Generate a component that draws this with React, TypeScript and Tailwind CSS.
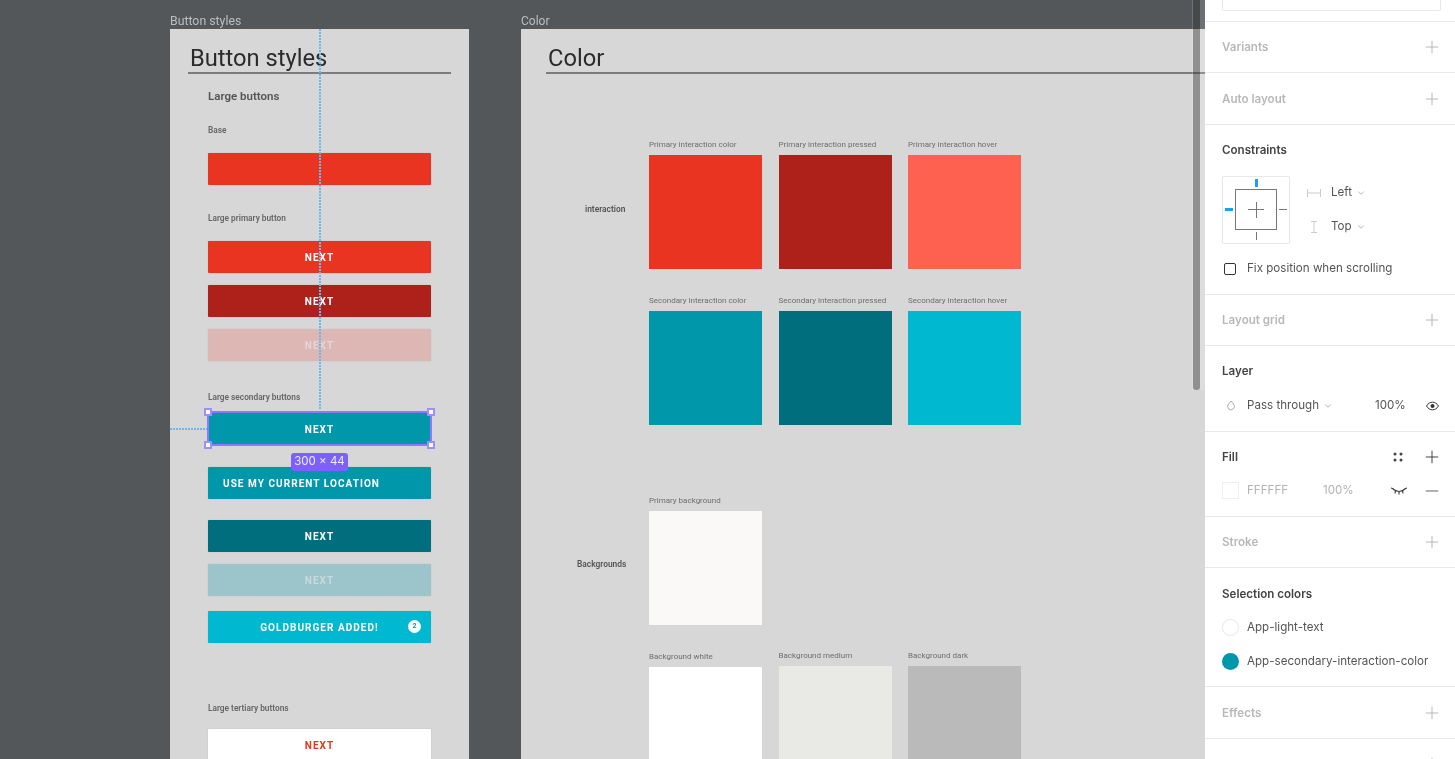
import { Plus, Minus, ChevronDown } from "lucide-react";

const swatchRows = [
  [
    { label: "Primary interaction color", color: "bg-[#e83421]" },
    { label: "Primary interaction pressed", color: "bg-[#ad211a]" },
    { label: "Primary interaction hover", color: "bg-[#ff6150]" },
  ],
  [
    { label: "Secondary interaction color", color: "bg-[#0097ab]" },
    { label: "Secondary interaction pressed", color: "bg-[#006e7c]" },
    { label: "Secondary interaction hover", color: "bg-[#00b8d0]" },
  ],
];

function SmallHeading({ children, className }: { children: string; className: string }) {
  return <p className={`font-['Roboto',sans-serif] text-[8.300px] leading-[10px] font-semibold text-[#666] ${className}`}>{children}</p>;
}

function BigButton({
  label,
  bg,
  text = "text-white",
  className = "",
  children,
}: {
  label: string;
  bg: string;
  text?: string;
  className?: string;
  children?: React.ReactNode;
}) {
  return (
    <div className={`relative flex h-[32px] w-[223px] items-center justify-center rounded-[1px] font-['Roboto',sans-serif] text-[10px] font-bold tracking-[1.050px] shadow-[0_0_2px_rgba(0,0,0,0.1)] ${bg} ${text} ${className}`}>
      {label}
      {children}
    </div>
  );
}

function Swatch({ label, color }: { label: string; color: string }) {
  return (
    <div className="w-[113px]">
      <p className="mb-[5px] h-[10px] whitespace-nowrap font-['Roboto',sans-serif] text-[8px] leading-[10px] text-[#6e6e6e]">{label}</p>
      <div className={`h-[114px] w-[113px] ${color}`} />
    </div>
  );
}

function PanelSection({ children, className = "" }: { children: React.ReactNode; className?: string }) {
  return <section className={`border-b border-[#e8e8e8] px-[17px] ${className}`}>{children}</section>;
}

function EmptySection({ title, height }: { title: string; height: string }) {
  return (
    <PanelSection className={`flex items-center justify-between ${height}`}>
      <span className="pt-[2px] text-[11.600px] font-semibold text-[#b8b8b8]">{title}</span>
      <Plus size={20} strokeWidth={1.1} className="mr-[-4px] text-[#b0b0b0]" />
    </PanelSection>
  );
}

function ConstraintsBox() {
  return (
    <div className="relative h-[68px] w-[68px] rounded-[2px] border border-[#e8e8e8]">
      <div className="absolute left-[12px] top-[12px] h-[41px] w-[42px] border border-[#777]" />
      <div className="absolute left-[25px] top-[32px] h-px w-[16px] bg-[#777]" />
      <div className="absolute left-[33px] top-[25px] h-[16px] w-px bg-[#777]" />
      <div className="absolute left-[32px] top-[2px] h-[8px] w-[3px] bg-[#18a0fb]" />
      <div className="absolute left-[2px] top-[31px] h-[3px] w-[8px] bg-[#18a0fb]" />
      <div className="absolute left-[56px] top-[32px] h-px w-[8px] bg-[#777]" />
      <div className="absolute left-[33px] top-[55px] h-[8px] w-px bg-[#777]" />
    </div>
  );
}

function PropertiesPanel() {
  return (
    <aside className="flex h-full w-[250px] shrink-0 flex-col bg-white font-['Inter',sans-serif] text-[#444]">
      <PanelSection className="h-[22px] shrink-0">
        <div className="h-[11px] w-[219px] rounded-b-[2px] border border-t-0 border-[#e8e8e8]" />
      </PanelSection>
      <EmptySection title="Variants" height="h-[51px] shrink-0" />
      <EmptySection title="Auto layout" height="h-[52px] shrink-0" />

      <PanelSection className="h-[170px] shrink-0 pt-[18px]">
        <h3 className="text-[11.600px] leading-[14px] font-semibold text-[#444]">Constraints</h3>
        <div className="mt-[19px] flex">
          <ConstraintsBox />
          <div className="ml-[17px] flex flex-col gap-[19px] pt-[9px] text-[11.600px] leading-[15px] text-[#555]">
            <div className="flex items-center">
              <svg width="14" height="10" viewBox="0 0 14 10" className="mr-[10px] text-[#ccc]" fill="none" stroke="currentColor">
                <path d="M.5 1v8M13.500 1v8M1 5h12" />
              </svg>
              Left
              <ChevronDown size={10} className="ml-[4px] text-[#aaa]" />
            </div>
            <div className="flex items-center">
              <svg width="14" height="14" viewBox="0 0 14 14" className="mr-[10px] text-[#ccc]" fill="none" stroke="currentColor">
                <path d="M4 1.500h6M4 12.500h6M7 2v10" />
              </svg>
              Top
              <ChevronDown size={10} className="ml-[4px] text-[#aaa]" />
            </div>
          </div>
        </div>
        <label className="mt-[16px] flex items-center text-[11.600px] text-[#555]">
          <span className="ml-[2px] mr-[11px] h-[12px] w-[12px] rounded-[2px] border border-[#333]" />
          Fix position when scrolling
        </label>
      </PanelSection>

      <EmptySection title="Layout grid" height="h-[51px] shrink-0" />

      <PanelSection className="h-[86px] shrink-0 pt-[18px]">
        <h3 className="text-[11.600px] leading-[14px] font-semibold text-[#444]">Layer</h3>
        <div className="mt-[19px] flex h-[17px] items-center whitespace-nowrap text-[11.600px] text-[#555]">
          <svg width="10" height="11" viewBox="0 0 10 11" className="ml-[4px] mr-[11px] shrink-0 text-[#aaa]" fill="none" stroke="currentColor">
            <path d="M5 1 7.600 4.200a3.400 3.400 0 1 1-5.200 0Z" />
          </svg>
          Pass through
          <ChevronDown size={10} className="ml-[4px] shrink-0 text-[#aaa]" />
          <span className="ml-[42px]">100%</span>
          <svg width="15" height="10" viewBox="0 0 14 10" className="ml-[19px] shrink-0 text-[#333]" fill="none" stroke="currentColor">
            <path d="M1 5c1.600-2.600 3.600-3.800 6-3.800S11.400 2.400 13 5c-1.600 2.600-3.600 3.800-6 3.800S2.600 7.600 1 5Z" />
            <circle cx="7" cy="5" r="2" fill="currentColor" stroke="none" />
          </svg>
        </div>
      </PanelSection>

      <PanelSection className="h-[85px] shrink-0 pt-[18px]">
        <div className="flex h-[14px] items-center justify-between">
          <h3 className="text-[11.600px] leading-[14px] font-semibold text-[#444]">Fill</h3>
          <div className="flex items-center gap-[19px]">
            <svg width="10" height="10" viewBox="0 0 10 10" className="text-[#444]" fill="currentColor">
              <circle cx="2" cy="2" r="1.500" />
              <circle cx="8" cy="2" r="1.500" />
              <circle cx="2" cy="8" r="1.500" />
              <circle cx="8" cy="8" r="1.500" />
            </svg>
            <Plus size={20} strokeWidth={1.1} className="mr-[-4px] text-[#333]" />
          </div>
        </div>
        <div className="mt-[18px] flex h-[17px] items-center whitespace-nowrap text-[11.600px] text-[#b3b3b3]">
          <span className="mr-[8px] h-[17px] w-[17px] shrink-0 border border-[#eee] bg-white" />
          <span className="w-[76px] shrink-0">FFFFFF</span>
          <span className="shrink-0">100%</span>
          <svg width="16" height="8" viewBox="0 0 16 8" className="ml-[37px] shrink-0 text-[#333]" fill="none" stroke="currentColor" strokeWidth="1.100">
            <path d="M1.500 1.500c2 2 4 3 6.500 3s4.500-1 6.500-3M4.500 3.500 4 6.500M8 4.500v3M11.500 3.500l.5 3M1.500 1.500 0 1M14.500 1.500 16 1" />
          </svg>
          <Minus size={20} strokeWidth={1.1} className="ml-[15px] shrink-0 text-[#555]" />
        </div>
      </PanelSection>

      <EmptySection title="Stroke" height="h-[51px] shrink-0" />

      <PanelSection className="h-[119px] shrink-0 pt-[19px]">
        <h3 className="text-[11.600px] leading-[14px] font-semibold text-[#444]">Selection colors</h3>
        <div className="mt-[18px] flex items-center text-[11.600px] leading-[17px] text-[#555]">
          <span className="mr-[8px] h-[17px] w-[17px] rounded-full border border-[#e8e8e8] bg-white" />
          App-light-text
        </div>
        <div className="mt-[17px] flex items-center text-[11.600px] leading-[17px] text-[#555]">
          <span className="mr-[8px] h-[17px] w-[17px] rounded-full bg-[#0097ab]" />
          App-secondary-interaction-color
        </div>
      </PanelSection>

      <EmptySection title="Effects" height="h-[52px] shrink-0" />
      <div className="flex justify-end px-[17px] pt-[15px]">
        <Plus size={20} strokeWidth={1.1} className="mr-[-4px] text-[#b0b0b0]" />
      </div>
    </aside>
  );
}

function ButtonStylesFrame() {
  return (
    <div className="w-[299px] shrink-0">
      <p className="h-[29px] pt-[14px] font-['Roboto',sans-serif] text-[12.300px] leading-[14px] text-[#bdbdbd]">Button styles</p>
      <div className="relative h-[730px] overflow-hidden bg-[#d7d7d7] pl-[38px]">
        <div className="-ml-[20px] h-[45px] w-[263px] border-b-2 border-[#7c7c7c] pl-[2px] pt-[15px] font-['Roboto',sans-serif] text-[23.700px] leading-[28px] text-[#2b2b2b]">
          Button styles
        </div>
        <p className="mt-[15px] font-['Roboto',sans-serif] text-[11.500px] leading-[14px] font-semibold text-[#555]">Large buttons</p>
        <SmallHeading className="mt-[22px]">Base</SmallHeading>
        <BigButton label="" bg="bg-[#e83421]" className="mt-[18px]" />
        <SmallHeading className="mt-[28px]">Large primary button</SmallHeading>
        <BigButton label="NEXT" bg="bg-[#e83421]" className="mt-[18px]" />
        <BigButton label="NEXT" bg="bg-[#ad211a]" className="mt-[12px]" />
        <BigButton label="NEXT" bg="bg-[#dcb7b3]" text="text-[#e6d5d3]" className="mt-[12px]" />
        <SmallHeading className="mt-[31px]">Large secondary buttons</SmallHeading>
        <BigButton label="NEXT" bg="bg-[#0097ab]" className="mt-[11px]" />
        <BigButton label="USE MY CURRENT LOCATION" bg="bg-[#0097ab]" className="mt-[22px] justify-start pl-[15px]" />
        <BigButton label="NEXT" bg="bg-[#006e7c]" className="mt-[21px]" />
        <BigButton label="NEXT" bg="bg-[#9bc5ca]" text="text-[#c9dadc]" className="mt-[12px]" />
        <BigButton label="GOLDBURGER ADDED!" bg="bg-[#00b8d0]" className="mt-[15px]">
          <span className="absolute right-[10px] top-[9px] flex h-[13px] w-[13px] items-center justify-center rounded-full bg-white text-[7px] font-bold tracking-normal text-[#0097ab]">2</span>
        </BigButton>
        <SmallHeading className="mt-[60px]">Large tertiary buttons</SmallHeading>
        <BigButton label="NEXT" bg="bg-white" text="text-[#e83421]" className="mt-[16px]" />

        {/* selection overlay, guides and size badge */}
        <div className="absolute left-[149px] top-0 h-[381px] w-[2px] bg-[repeating-linear-gradient(to_bottom,#6ab8ef_0,#6ab8ef_2px,transparent_2px,transparent_3px)]" />
        <div className="absolute left-0 top-[399px] h-[2px] w-[37px] bg-[repeating-linear-gradient(to_right,#6ab8ef_0,#6ab8ef_2px,transparent_2px,transparent_3px)]" />
        <div className="absolute left-[37px] top-[382px] h-[35px] w-[225px] border-2 border-[#8f78ff]" />
        <span className="absolute left-[34px] top-[379px] h-[8px] w-[8px] border-2 border-[#a08dff] bg-white" />
        <span className="absolute left-[257px] top-[379px] h-[8px] w-[8px] border-2 border-[#a08dff] bg-white" />
        <span className="absolute left-[34px] top-[412px] h-[8px] w-[8px] border-2 border-[#a08dff] bg-white" />
        <span className="absolute left-[257px] top-[412px] h-[8px] w-[8px] border-2 border-[#a08dff] bg-white" />
        <span className="absolute left-[121px] top-[424px] flex h-[18px] w-[57px] items-center justify-center rounded-[3px] bg-[#7b61ff] font-['Inter',sans-serif] text-[11.500px] text-[#eee]">300 × 44</span>
      </div>
    </div>
  );
}

function ColorFrame() {
  return (
    <div className="relative ml-[52px] min-w-0 flex-1">
      <p className="h-[29px] pt-[14px] font-['Roboto',sans-serif] text-[12px] leading-[14px] text-[#bdbdbd]">Color</p>
      <div className="relative h-[730px] overflow-hidden bg-[#d7d7d7] pl-[25px]">
        <div className="h-[45px] border-b-2 border-[#7c7c7c] pl-[2px] pt-[15px] font-['Roboto',sans-serif] text-[23.700px] leading-[28px] text-[#2b2b2b]">
          Color
        </div>

        <div className="mt-[66px] ml-[103px] flex flex-col gap-[27px]">
          {swatchRows.map((row, i) => (
            <div key={i} className="flex gap-[16.500px]">
              {row.map((s) => (
                <Swatch key={s.label} {...s} />
              ))}
            </div>
          ))}
        </div>
        <p className="absolute left-[64px] top-[175px] font-['Roboto',sans-serif] text-[8.400px] leading-[10px] font-semibold text-[#555]">interaction</p>

        <div className="mt-[71px] ml-[103px]">
          <Swatch label="Primary background" color="bg-[#faf9f7]" />
        </div>
        <p className="absolute left-[56px] top-[530px] font-['Roboto',sans-serif] text-[8.400px] leading-[10px] font-semibold text-[#555]">Backgrounds</p>

        <div className="mt-[26px] ml-[103px] flex gap-[16.500px]">
          <div className="pt-px">
            <Swatch label="Background white" color="bg-white" />
          </div>
          <Swatch label="Background medium" color="bg-[#e9eae6]" />
          <Swatch label="Background dark" color="bg-[#bababa]" />
        </div>
      </div>

      {/* canvas scrollbar sits over the frame, so it stays see-through */}
      <div className="absolute right-0 top-0 h-[390px] w-[13px] bg-white/15">
        <div className="ml-px h-[390px] w-[7px] rounded-b-[3px] bg-black/35" />
      </div>
    </div>
  );
}

export default function App() {
  return (
    <div className="flex h-[759px] w-[1455px] overflow-hidden bg-[#53575a] blur-[0.4px]">
      <main className="flex min-w-0 flex-1 pl-[170px]">
        <ButtonStylesFrame />
        <ColorFrame />
      </main>
      <PropertiesPanel />
    </div>
  );
}
